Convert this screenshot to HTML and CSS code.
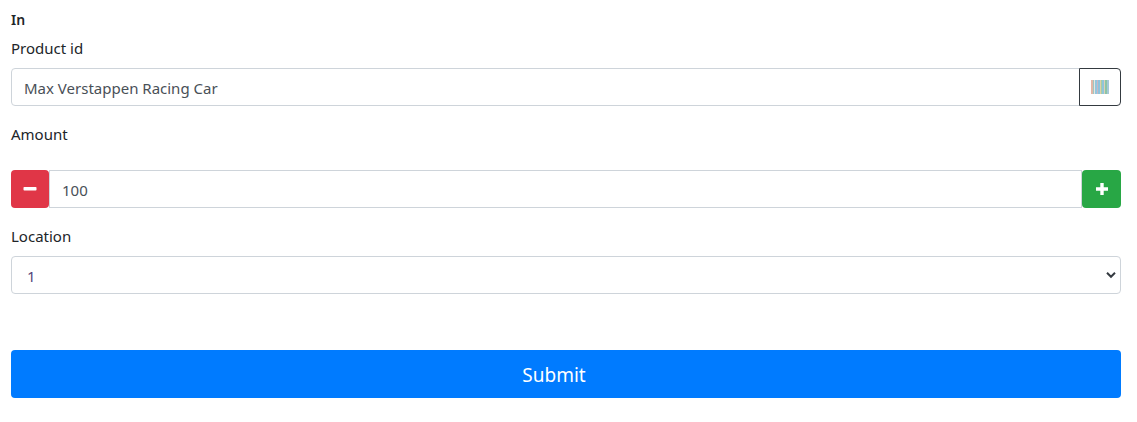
FILE: index.html
```html
<!DOCTYPE html>
<html>
<head>
    <title>In</title>
    <link rel="stylesheet" href="styles.css">
</head>
<body>
    <form class="content">
        <h6 class="title">In</h6>

        <label class="label label-product">Product id</label>
        <div class="input-row">
            <input class="input input-left" type="text" value="Max Verstappen Racing Car">
            <button class="scan-btn" type="button">
                <svg class="barcode" width="18" height="14" viewBox="0 0 18 14">
                    <rect x="0" width="2" height="14" fill="#e3b7a8"/>
                    <rect x="2" width="1" height="14" fill="#9fc7c2"/>
                    <rect x="3" width="1" height="14" fill="#e6e6e0"/>
                    <rect x="4" width="2" height="14" fill="#94c6de"/>
                    <rect x="6" width="1" height="14" fill="#c9b8c4"/>
                    <rect x="7" width="2" height="14" fill="#8fc3dc"/>
                    <rect x="9" width="1" height="14" fill="#e2cfa6"/>
                    <rect x="10" width="1" height="14" fill="#a3cfa9"/>
                    <rect x="11" width="2" height="14" fill="#91c4dc"/>
                    <rect x="13" width="1" height="14" fill="#dcd2b4"/>
                    <rect x="14" width="2" height="14" fill="#8dc4a6"/>
                    <rect x="16" width="2" height="14" fill="#a5c9d8"/>
                </svg>
            </button>
        </div>

        <label class="label label-amount">Amount</label>
        <div class="input-row">
            <button class="step-btn step-minus" type="button">
                <svg width="14" height="14" viewBox="0 0 14 14"><rect x="0.500" y="5" width="13" height="3.500" rx="0.800" fill="#fff"/></svg>
            </button>
            <input class="input input-middle" type="text" value="100">
            <button class="step-btn step-plus" type="button">
                <svg width="14" height="14" viewBox="0 0 14 14"><path d="M5.300 1h3.400v4.300H13v3.400H8.700V13H5.300V8.700H1V5.300h4.300z" fill="#fff"/></svg>
            </button>
        </div>

        <label class="label label-location">Location</label>
        <div class="select-wrap">
            <select class="input select">
                <option>1</option>
            </select>
            <svg class="chevron" width="10" height="8" viewBox="0 0 10 8"><path d="M1 1.800l4 4 4-4" fill="none" stroke="#343a40" stroke-width="2"/></svg>
        </div>

        <button class="submit-btn" type="button">Submit</button>
    </form>
</body>
</html>
```

FILE: styles.css
```css
* {
    box-sizing: border-box;
}
body {
    background-color: #fff;
    color: #212529;
    font-family: "Noto Sans", "Open Sans", sans-serif;
    font-size: 15px;
    margin: 0;
    padding: 0;
}
.content {
    padding: 10px 16px 0 11px;
    display: flex;
    flex-direction: column;
}
.title {
    font-size: 14px;
    font-weight: 600;
    line-height: 20px;
    margin: 0;
}
.label {
    display: block;
    line-height: 22px;
}
.label-product {
    margin-top: 7px;
    margin-bottom: 9px;
}
.label-amount {
    margin-top: 17px;
    margin-bottom: 25px;
}
.label-location {
    margin-top: 17px;
    margin-bottom: 9px;
}
.input-row {
    display: flex;
    height: 38px;
}
.input {
    flex: 1;
    min-width: 0;
    height: 38px;
    padding: 2px 12px 0;
    border: 1px solid #ced4da;
    background-color: #fff;
    color: #495057;
    font-family: inherit;
    font-size: 15px;
    outline: none;
}
.input-left {
    border-radius: 4px 0 0 4px;
}
.input-middle {
    border-radius: 0;
}
.scan-btn {
    width: 42px;
    height: 38px;
    margin-left: -1px;
    padding: 0;
    display: flex;
    align-items: center;
    justify-content: center;
    background-color: #fff;
    border: 1px solid #343a40;
    border-radius: 0 4px 4px 0;
}
.step-btn {
    height: 38px;
    padding: 0;
    border: none;
    border-radius: 4px;
    display: flex;
    align-items: center;
    justify-content: center;
    flex-shrink: 0;
}
.step-minus {
    width: 38px;
    background-color: #e03647;
}
.step-plus {
    width: 39px;
    background-color: #28a745;
}
.select-wrap {
    position: relative;
    height: 38px;
    display: flex;
}
.select {
    width: 100%;
    padding-left: 15px;
    color: #55477a;
    border-radius: 4px;
    appearance: none;
}
.chevron {
    position: absolute;
    right: 5px;
    top: 15px;
}
.submit-btn {
    height: 48px;
    margin-top: 56px;
    padding: 2px 24px 0 0;
    background-color: #007bff;
    color: #fff;
    border: none;
    border-radius: 4px;
    font-family: inherit;
    font-size: 19px;
    cursor: pointer;
}
```
